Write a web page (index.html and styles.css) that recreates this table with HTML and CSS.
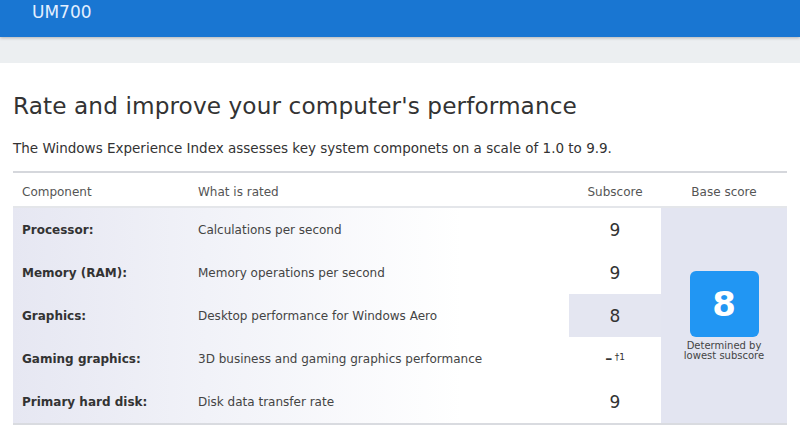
FILE: index.html
```html
<!DOCTYPE html>
<html>
<head>
<meta charset="utf-8">
<link rel="stylesheet" href="styles.css">
</head>
<body>
<header class="topbar"><span class="device">UM700</span></header>
<div class="subbar"></div>
<main class="content">
  <h1 class="title">Rate and improve your computer's performance</h1>
  <p class="intro">The Windows Experience Index assesses key system componets on a scale of 1.0 to 9.9.</p>
  <table class="wei">
    <thead>
      <tr>
        <th class="c-comp">Component</th>
        <th class="c-what">What is rated</th>
        <th class="c-sub">Subscore</th>
        <th class="c-base">Base score</th>
      </tr>
    </thead>
    <tbody>
      <tr>
        <td class="c-comp name">Processor:</td>
        <td class="c-what">Calculations per second</td>
        <td class="c-sub score">9</td>
        <td class="c-base base" rowspan="5">
          <div class="badge">8</div>
          <div class="note">Determined by<br>lowest subscore</div>
        </td>
      </tr>
      <tr>
        <td class="c-comp name">Memory (RAM):</td>
        <td class="c-what">Memory operations per second</td>
        <td class="c-sub score">9</td>
      </tr>
      <tr>
        <td class="c-comp name">Graphics:</td>
        <td class="c-what">Desktop performance for Windows Aero</td>
        <td class="c-sub score lowest">8</td>
      </tr>
      <tr>
        <td class="c-comp name">Gaming graphics:</td>
        <td class="c-what">3D business and gaming graphics performance</td>
        <td class="c-sub score"><span class="dash">-</span><sup class="fn">†1</sup></td>
      </tr>
      <tr>
        <td class="c-comp name">Primary hard disk:</td>
        <td class="c-what">Disk data transfer rate</td>
        <td class="c-sub score">9</td>
      </tr>
    </tbody>
  </table>
</main>
</body>
</html>
```

FILE: styles.css
```css
html, body {
  margin: 0;
  padding: 0;
  background: #ffffff;
  font-family: "DejaVu Sans", Verdana, sans-serif;
  color: #333333;
}

.topbar {
  height: 37px;
  background: #1976d2;
  box-shadow: 0 1px 3px rgba(0, 0, 0, 0.25);
  position: relative;
  z-index: 1;
  box-sizing: border-box;
  padding: 1px 0 0 32px;
}

.device {
  color: #e3efff;
  font-size: 17px;
  line-height: 22px;
}

.subbar {
  height: 26px;
  background: #eceff1;
}

.content {
  padding: 0 13px;
}

.title {
  margin: 27px 0 0;
  font-size: 23.2px;
  font-weight: normal;
  line-height: 32px;
  color: #333333;
  letter-spacing: 0.1px;
}

.intro {
  margin: 16px 0 0;
  font-size: 13.5px;
  line-height: 20px;
  color: #333333;
}

.wei {
  margin-top: 13px;
  width: 774px;
  border-collapse: collapse;
  border-top: 2px solid #d5d7dc;
  border-bottom: 2px solid #d9dbe0;
  font-size: 12px;
}

.wei th {
  height: 29px;
  font-weight: normal;
  color: #555555;
  border-bottom: 2px solid #e4e6ea;
  padding: 4px 0 0;
}

.wei td {
  height: 43px;
  padding: 0;
  color: #444444;
}

.wei tbody {
  background: linear-gradient(90deg, #e6e7f2 0%, #f1f2f8 25%, #ffffff 58%, #ffffff 100%);
}

.c-comp {
  width: 167px;
  text-align: left;
  padding-left: 9px !important;
}

.c-what {
  width: 371px;
  text-align: left;
  padding-left: 9px !important;
}

.c-sub {
  width: 92px;
  text-align: center;
}

.c-base {
  text-align: center;
}

.name {
  font-weight: bold;
  color: #333333 !important;
}

.wei td.score {
  background: #ffffff;
  font-size: 17px;
  color: #333333;
}

.wei td.score.lowest {
  background: #e4e6f1;
}

.dash {
  font-size: 21px;
  line-height: 17px;
}

.fn {
  font-size: 9px;
  vertical-align: 5px;
  margin-left: 2px;
}

.wei td.base {
  background: #e3e5f1;
  vertical-align: top;
  padding-top: 63px;
}

.badge {
  width: 69px;
  height: 66px;
  margin: 0 auto;
  background: #2196f3;
  border-radius: 6px;
  color: #ffffff;
  font-weight: bold;
  font-size: 34px;
  line-height: 66px;
}

.note {
  margin-top: 4px;
  font-size: 10px;
  line-height: 10px;
  color: #444444;
}
```
